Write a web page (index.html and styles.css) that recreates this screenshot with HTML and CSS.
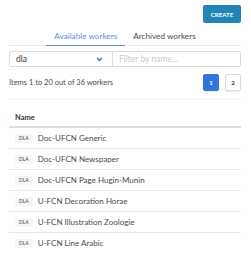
FILE: index.html
```html
<!DOCTYPE html>
<html>
<head>
<meta charset="utf-8">
<link rel="stylesheet" href="styles.css">
</head>
<body>
<div class="page">
  <div class="top">
    <button class="create">CREATE</button>
  </div>
  <div class="tabs">
    <a class="tab active">Available workers</a>
    <a class="tab">Archived workers</a>
  </div>
  <div class="filters">
    <div class="select">
      <span>dla</span>
      <svg class="chev" width="7" height="5" viewBox="0 0 7 5"><path d="M1 1 L3.5 3.5 L6 1" fill="none" stroke="#3273dc" stroke-width="1.4"/></svg>
    </div>
    <div class="input">Filter by name...</div>
  </div>
  <div class="pager">
    <span class="count">Items 1 to 20 out of 36 workers</span>
    <div class="pages">
      <span class="pg current">1</span>
      <span class="pg">2</span>
    </div>
  </div>
  <div class="sep"></div>
  <div class="thead">Name</div>
  <div class="rows">
    <div class="row"><span class="tag">DLA</span><span class="name">Doc-UFCN Generic</span></div>
    <div class="row"><span class="tag">DLA</span><span class="name">Doc-UFCN Newspaper</span></div>
    <div class="row"><span class="tag">DLA</span><span class="name">Doc-UFCN Page Hugin-Munin</span></div>
    <div class="row"><span class="tag">DLA</span><span class="name">U-FCN Decoration Horae</span></div>
    <div class="row"><span class="tag">DLA</span><span class="name">U-FCN Illustration Zoologie</span></div>
    <div class="row"><span class="tag">DLA</span><span class="name">U-FCN Line Arabic</span></div>
  </div>
</div>
</body>
</html>
```
FILE: styles.css
```css
* { box-sizing: border-box; }
html, body { margin: 0; padding: 0; background: #fff; }
body { font-family: Lato, "Noto Sans", sans-serif; color: #4a4a4a; font-size: 8px; overflow: hidden; }
.page { padding: 5px 10px 0 9px; }
.top { display: flex; justify-content: flex-end; }
.create {
  width: 38px; height: 18px; border: none; border-radius: 2px;
  background: #2385b5; color: #fff; font-family: Lato, sans-serif;
  font-size: 6px; font-weight: 700; padding: 0; letter-spacing: 0.1px;
}
.tabs { display: flex; justify-content: center; border-bottom: 1px solid #e8e8e8; margin-top: 3px; }
.tab { padding: 5px 8px 4px; font-size: 8.2px; color: #4a4a4a; border-bottom: 1px solid transparent; margin-bottom: -1px; }
.tab.active { color: #5c8ee0; border-bottom-color: #5c8ee0; }
.filters { display: flex; margin-top: 5px; height: 16px; }
.select { width: 104px; border: 1px solid #dbdbdb; border-radius: 2px 0 0 2px; display: flex; align-items: center; justify-content: space-between; padding: 0 9px 0 6px; font-size: 8.5px; color: #363636; }
.chev { display: block; }
.input { flex: 1; border: 1px solid #dbdbdb; border-left: none; border-radius: 0 2px 2px 0; display: flex; align-items: center; padding-left: 6px; color: #c9c9c9; font-size: 8.5px; }
.pager { display: flex; justify-content: space-between; align-items: center; margin-top: 7px; }
.count { font-size: 7.5px; color: #4a4a4a; }
.pages { display: flex; gap: 6px; }
.pg { width: 16px; height: 17px; border: 1px solid #dbdbdb; border-radius: 2px; display: flex; align-items: center; justify-content: center; font-size: 6px; font-weight: 700; color: #363636; box-shadow: 0 1px 1px rgba(0,0,0,0.08); }
.pg.current { background: #3273dc; border-color: #3273dc; color: #fff; }
.sep { height: 1px; background: #f0f0f0; margin-top: 8px; }
.thead { font-weight: 700; font-size: 7.5px; color: #363636; padding: 13px 0 4px 6px; border-bottom: 2px solid #dbdbdb; }
.row { display: flex; align-items: center; height: 21px; border-bottom: 1px solid #e8e8e8; padding-left: 6px; }
.tag { background: #f5f5f5; color: #4a4a4a; font-size: 5px; height: 9px; padding: 0 4px; display: flex; align-items: center; border-radius: 2px; margin-right: 5px; }
.name { font-size: 8px; color: #4a4a4a; }
```
